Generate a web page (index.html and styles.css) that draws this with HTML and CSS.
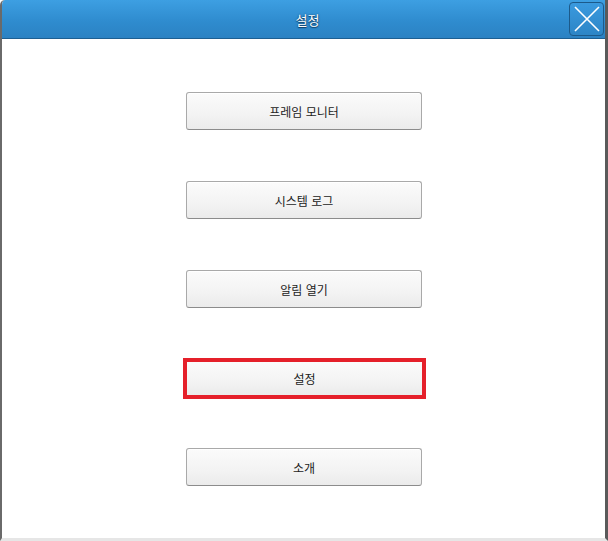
FILE: index.html
```html
<!DOCTYPE html>
<html lang="ko">
<head>
<meta charset="utf-8">
<title>설정</title>
<link rel="stylesheet" href="styles.css">
</head>
<body>
<div class="window">
  <header class="titlebar">
    <span class="title">설정</span>
    <button class="close" aria-label="닫기">
      <svg width="32" height="32" viewBox="0 0 32 32"><path d="M4 4 L28 28 M28 4 L4 28" stroke="#fff" stroke-width="1.6" fill="none"/></svg>
    </button>
  </header>
  <main class="content">
    <button class="menu-btn">프레임 모니터</button>
    <button class="menu-btn">시스템 로그</button>
    <button class="menu-btn">알림 열기</button>
    <button class="menu-btn selected">설정</button>
    <button class="menu-btn">소개</button>
  </main>
</div>
</body>
</html>
```
FILE: styles.css
```css
html, body {
  margin: 0;
  padding: 0;
  background: #fff;
}
body {
  font-family: "Noto Sans CJK KR", "Noto Sans", sans-serif;
}
.window {
  width: 608px;
  height: 541px;
  box-sizing: border-box;
  border-left: 2px solid #6a6a6a;
  border-right: 3px solid #5a5a5a;
  border-bottom: 3px solid #e6e6e6;
  border-top-left-radius: 5px;
  display: flex;
  flex-direction: column;
  overflow: hidden;
  background: #fff;
}
.titlebar {
  height: 38px;
  flex: none;
  background: linear-gradient(#3d9fe2, #2f8ccf 55%, #2b82c3);
  border-bottom: 1px solid #1d5f92;
  display: flex;
  align-items: center;
  justify-content: center;
  position: relative;
}
.title {
  color: #fff;
  font-size: 13px;
  text-shadow: 0 0 2px #0d3e66, 0 1px 1px #0d3e66;
  margin-left: 8px;
}
.close {
  position: absolute;
  right: 1px;
  top: 2px;
  width: 35px;
  height: 34px;
  padding: 0;
  border: 1px solid #1c5a8a;
  border-radius: 4px;
  background: linear-gradient(#3a9adf, #2c85c6);
  display: flex;
  align-items: center;
  justify-content: center;
}
.close svg { display: block; }
.content {
  flex: 1;
  display: flex;
  flex-direction: column;
  align-items: center;
  gap: 51px;
  padding-top: 53px;
  padding-left: 1px;
}
.menu-btn {
  width: 236px;
  height: 38px;
  flex: none;
  box-sizing: border-box;
  border: 1px solid #a9a9a9;
  border-bottom-color: #8c8c8c;
  border-radius: 3px;
  background: linear-gradient(#fbfbfb, #f3f3f3 60%, #ebebeb);
  box-shadow: inset 0 1px 0 #fff;
  font-family: "Noto Sans CJK KR", "Noto Sans", sans-serif;
  font-size: 12px;
  color: #222;
  padding: 0;
}
.menu-btn.selected {
  width: 243px;
  height: 41px;
  margin: -1px 0 -2px 1px;
  border: 4px solid #e5202a;
  border-radius: 0;
  box-shadow: none;
}
```
